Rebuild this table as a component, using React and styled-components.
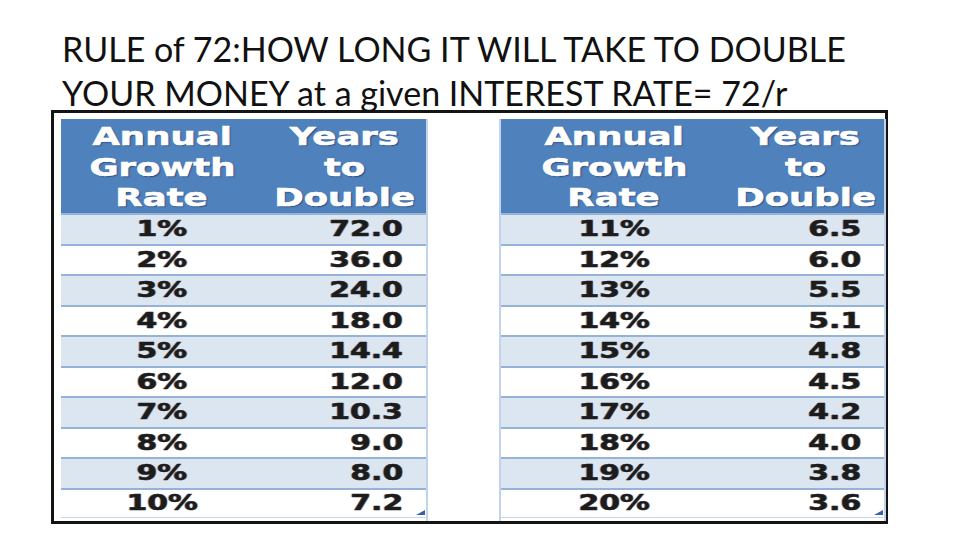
import styled, { createGlobalStyle } from "styled-components";

const GlobalStyle = createGlobalStyle`
  html, body {
    margin: 0;
    padding: 0;
    background: #ffffff;
  }
`;

const left = [
  ["1%", "72.0"],
  ["2%", "36.0"],
  ["3%", "24.0"],
  ["4%", "18.0"],
  ["5%", "14.4"],
  ["6%", "12.0"],
  ["7%", "10.3"],
  ["8%", "9.0"],
  ["9%", "8.0"],
  ["10%", "7.2"],
];

const right = [
  ["11%", "6.5"],
  ["12%", "6.0"],
  ["13%", "5.5"],
  ["14%", "5.1"],
  ["15%", "4.8"],
  ["16%", "4.5"],
  ["17%", "4.2"],
  ["18%", "4.0"],
  ["19%", "3.8"],
  ["20%", "3.6"],
];

const RateTable = ({ rows, cols, edgeLeft }) => (
  <Table $cols={cols} $edgeLeft={edgeLeft}>
    <HeadCell>
      <Stretch>Annual</Stretch>
      <Stretch>Growth</Stretch>
      <Stretch>Rate</Stretch>
    </HeadCell>
    <HeadCell>
      <Stretch>Years</Stretch>
      <Stretch>to</Stretch>
      <Stretch>Double</Stretch>
    </HeadCell>
    {rows.map(([rate, years], i) => (
      <Row key={rate} $alt={i % 2 === 0} $last={i === rows.length - 1}>
        <Cell>
          <Value>{rate}</Value>
        </Cell>
        <Cell $right>
          <Value $right>{years}</Value>
        </Cell>
      </Row>
    ))}
  </Table>
);

export default function App() {
  return (
    <>
      <GlobalStyle />
      <Slide>
        <Title>
          RULE of 72:HOW LONG IT WILL TAKE TO DOUBLE
          <br />
          YOUR MONEY at a given INTEREST RATE= 72/r
        </Title>
        <Frame>
          <RateTable rows={left} cols="202px 163px" />
          <RateTable rows={right} cols="226px 157px" edgeLeft />
        </Frame>
      </Slide>
    </>
  );
}

// SLIDE
const Slide = styled.div`
  width: 960px;
  height: 540px;
  box-sizing: border-box;
  padding-top: 27px;
  overflow: hidden;
  background: #ffffff;
`;

const Title = styled.h1`
  margin: 0 0 0 62px;
  font-family: Lato, "Open Sans", sans-serif;
  font-weight: 400;
  font-size: 34px;
  line-height: 44px;
  color: #111111;
  white-space: nowrap;
`;

const Frame = styled.div`
  margin: -5px 0 0 51px;
  width: 837px;
  height: 414px;
  box-sizing: border-box;
  border: 3px solid #141414;
  padding: 6px 5px 0 7px;
  display: flex;
  gap: 71px;
  background: #ffffff;
`;

// TABLE
const Table = styled.div`
  display: grid;
  grid-template-columns: ${(p) => p.$cols};
  align-content: start;
  border-right: 2px solid #c3d4ea;
  border-left: ${(p) => (p.$edgeLeft ? "2px solid #c3d4ea" : "none")};
  height: 402px;
  font-family: "DejaVu Sans", Verdana, sans-serif;
  font-weight: bold;
`;

const HeadCell = styled.div`
  height: 94px;
  box-sizing: border-box;
  padding-top: 3px;
  background: #4f81bd;
  display: flex;
  flex-direction: column;
  align-items: center;
  font-size: 25px;
  line-height: 30.5px;
  color: #ffffff;
  -webkit-text-stroke: 0.6px #ffffff;
  text-shadow: 1px 1px 1px rgba(20, 40, 80, 0.6);
`;

const Stretch = styled.span`
  display: inline-block;
  transform: scaleX(1.42);
  transform-origin: center;
`;

const Row = styled.div`
  display: contents;

  & > div {
    background: ${(p) => (p.$alt ? "#dce6f1" : "#ffffff")};
    border-bottom: ${(p) => (p.$last ? "1px solid #c8d6e8" : "none")};
  }
  & > div:last-child::after {
    content: ${(p) => (p.$last ? '""' : "none")};
    position: absolute;
    right: 1px;
    bottom: 2px;
    border-left: 9px solid transparent;
    border-bottom: 5px solid #3b5fae;
  }
`;

const Cell = styled.div`
  position: relative;
  height: 30.5px;
  box-sizing: border-box;
  border-top: 2px solid #95b3d7;
  display: flex;
  align-items: center;
  justify-content: ${(p) => (p.$right ? "flex-end" : "center")};
  padding-right: ${(p) => (p.$right ? "23px" : "0")};
  font-size: 21px;
  color: #1c1c1c;
`;

const Value = styled.span`
  display: inline-block;
  transform: scaleX(1.42);
  transform-origin: ${(p) => (p.$right ? "right" : "center")};
  -webkit-text-stroke: 0.5px #1c1c1c;
  text-shadow: 1px 0 0 rgba(190, 120, 40, 0.35), -1px 0 0 rgba(50, 90, 190, 0.3);
`;
